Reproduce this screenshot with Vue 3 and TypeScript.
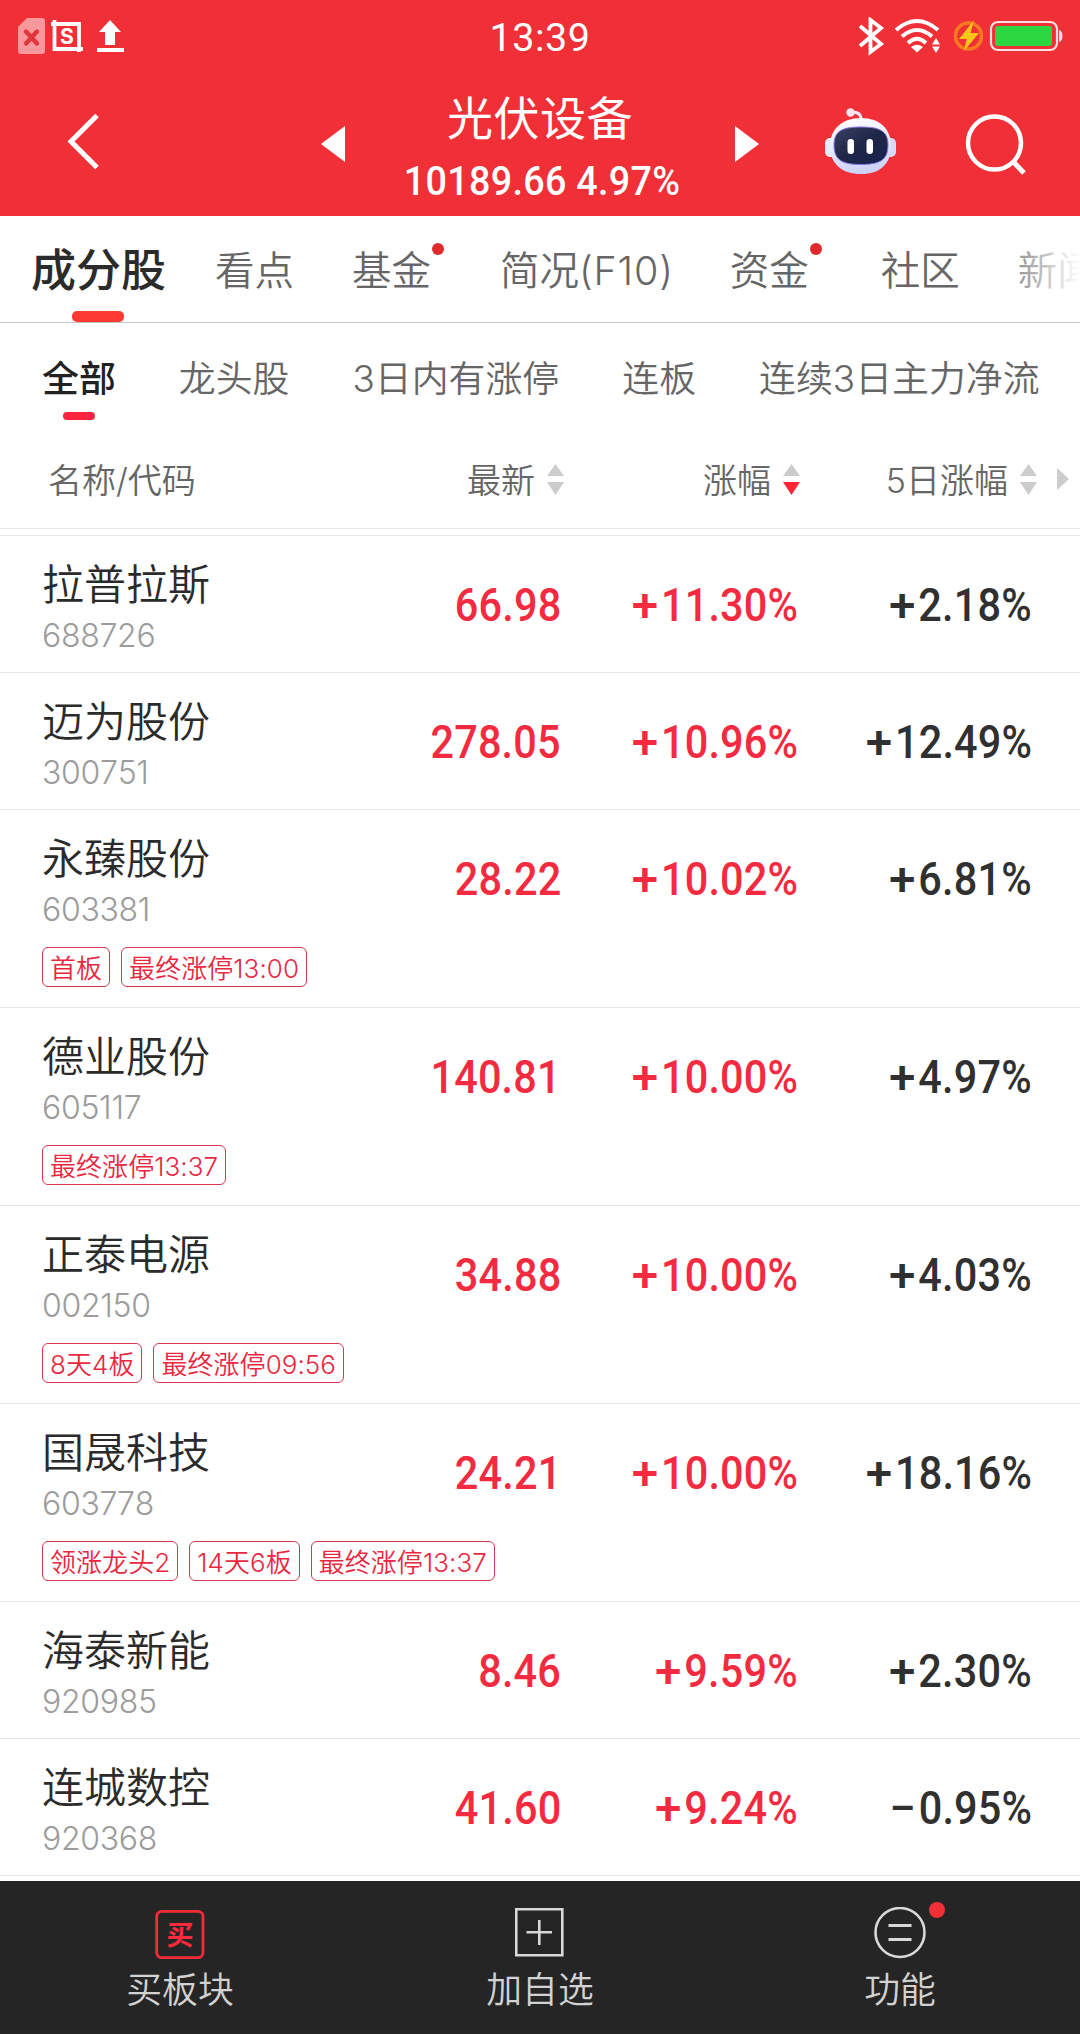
<script setup lang="ts">
interface Stock {
  name: string
  code: string
  price: string
  change: string
  five: string
  tags: string[]
}

const tabs = [
  { label: '成分股', active: true },
  { label: '看点' },
  { label: '基金', dot: true },
  { label: '简况', suffix: '(F10)' },
  { label: '资金', dot: true },
  { label: '社区' },
  { label: '新闻' },
]

const filters = ['全部', '龙头股', '3日内有涨停', '连板', '连续3日主力净流']

const stocks: Stock[] = [
  { name: '拉普拉斯', code: '688726', price: '66.98', change: '+11.30%', five: '+2.18%', tags: [] },
  { name: '迈为股份', code: '300751', price: '278.05', change: '+10.96%', five: '+12.49%', tags: [] },
  { name: '永臻股份', code: '603381', price: '28.22', change: '+10.02%', five: '+6.81%', tags: ['首板', '最终涨停13:00'] },
  { name: '德业股份', code: '605117', price: '140.81', change: '+10.00%', five: '+4.97%', tags: ['最终涨停13:37'] },
  { name: '正泰电源', code: '002150', price: '34.88', change: '+10.00%', five: '+4.03%', tags: ['8天4板', '最终涨停09:56'] },
  { name: '国晟科技', code: '603778', price: '24.21', change: '+10.00%', five: '+18.16%', tags: ['领涨龙头2', '14天6板', '最终涨停13:37'] },
  { name: '海泰新能', code: '920985', price: '8.46', change: '+9.59%', five: '+2.30%', tags: [] },
  { name: '连城数控', code: '920368', price: '41.60', change: '+9.24%', five: '−0.95%', tags: [] },
]
</script>

<template>
  <div class="screen">
    <header class="top">
      <div class="status">
        <svg class="status-left" width="112" height="44" viewBox="0 0 112 44">
          <path d="M9 0H24a3 3 0 0 1 3 3V33a3 3 0 0 1-3 3H3a3 3 0 0 1-3-3V9Z" fill="#f9989b" />
          <path d="M8 13.500L19 25.500M19 13.500L8 25.500" stroke="#e2343b" stroke-width="4.400" stroke-linecap="round" />
          <path d="M36.500 2V31H65M33 6H61V34" fill="none" stroke="#fff" stroke-width="3.800" />
          <text x="49" y="26" text-anchor="middle" class="s-letter">S</text>
          <path d="M92 2L103 14H97V27H87V14H81Z" fill="#fff" />
          <path d="M79 32H106" stroke="#fff" stroke-width="4" />
        </svg>
        <span class="clock">13:39</span>
        <svg class="status-right" width="204" height="40" viewBox="0 0 204 40">
          <path d="M1 9L22 27L11.500 35V3L22 11L1 29" fill="none" stroke="#fff" stroke-width="3.800" />
          <g fill="none" stroke="#fff" stroke-width="4">
            <path d="M37 13Q58 -5 79 13" />
            <path d="M43 19.500Q58 6.500 73 19.500" />
            <path d="M49 26Q58 17.500 67 26" />
          </g>
          <path d="M52 30Q58 25.500 64 30L58 35.500Z" fill="#fff" />
          <path d="M77 21L81 27.500H73ZM77 36L81 29.500H73Z" fill="#fff" />
          <circle cx="109.500" cy="19" r="13" fill="none" stroke="#f77a22" stroke-width="3.500" />
          <path d="M115 3L100 22H107.500L105 34L120 16H111.500Z" fill="#ffc518" />
          <rect x="132" y="5" width="66" height="28" rx="7" fill="none" stroke="#ffe1e1" stroke-width="2.200" />
          <rect x="136" y="9" width="57" height="20" rx="3" fill="#2bd841" />
          <path d="M200 13Q203.500 14 203.500 19T200 25Z" fill="#ffe1e1" />
        </svg>
      </div>
      <div class="nav">
        <svg class="back" width="36" height="64" viewBox="0 0 36 64">
          <path d="M31 5.500L5 31.500L31 57.500" fill="none" stroke="#fff" stroke-width="5" />
        </svg>
        <svg class="prev" width="24" height="36" viewBox="0 0 24 36"><path d="M24 0V36L0 18Z" fill="#fff" /></svg>
        <div class="heading">
          <h1>光伏设备</h1>
          <div class="index"><span>10189.66 4.97%</span></div>
        </div>
        <svg class="next" width="24" height="36" viewBox="0 0 24 36"><path d="M0 0V36L24 18Z" fill="#fff" /></svg>
        <svg class="robot" width="74" height="70" viewBox="0 0 74 70">
          <defs>
            <linearGradient id="shell" x1="0" y1="0" x2="0.200" y2="1">
              <stop offset="0" stop-color="#fff" />
              <stop offset="0.600" stop-color="#e6e8fb" />
              <stop offset="1" stop-color="#cdd2f6" />
            </linearGradient>
            <linearGradient id="visor" x1="0" y1="0" x2="1" y2="1">
              <stop offset="0" stop-color="#3b4265" />
              <stop offset="0.500" stop-color="#1e2647" />
              <stop offset="1" stop-color="#172350" />
            </linearGradient>
          </defs>
          <path d="M26 5Q38 2 37 14" fill="none" stroke="#f3e9fa" stroke-width="3.200" />
          <circle cx="26.500" cy="4.500" r="4.200" fill="#fbe6ef" />
          <rect x="1" y="30" width="14" height="19" rx="5" fill="#e9ebfd" />
          <rect x="58" y="30" width="14" height="19" rx="5" fill="#d5d9fa" />
          <path d="M37 10C56 10 67 21 67 38C67 56 56 66 37 66S6 56 6 38C6 21 18 10 37 10Z" fill="url(#shell)" />
          <path d="M37 19C56 19 64 23 64 37C64 52 56 56.500 37 56.500S10 52 10 37C10 23 18 19 37 19Z" fill="url(#visor)" stroke="#8978e8" stroke-width="1" />
          <rect x="23.500" y="31" width="6.500" height="15" rx="3.250" fill="#fff" />
          <rect x="42.500" y="31" width="6.500" height="15" rx="3.250" fill="#fff" />
        </svg>
        <svg class="search" width="64" height="64" viewBox="0 0 64 64">
          <circle cx="29.500" cy="30" r="26.500" fill="none" stroke="#fff" stroke-width="4.500" />
          <path d="M47.500 48L59 60" stroke="#fff" stroke-width="5" />
        </svg>
      </div>
    </header>

    <nav class="tabs">
      <div v-for="t in tabs" :key="t.label" class="tab" :class="{ active: t.active, dotted: t.dot }">
        {{ t.label }}<span v-if="t.suffix" class="suffix">{{ t.suffix }}</span><i v-if="t.dot" class="dot"></i>
      </div>
    </nav>

    <div class="filters">
      <div v-for="(f, i) in filters" :key="f" class="filter" :class="{ active: i === 0 }">{{ f }}</div>
    </div>

    <div class="thead">
      <span class="h-name">名称/代码</span>
      <span class="h-cell h1c">最新<svg width="17" height="31" viewBox="0 0 17 31"><path d="M8.500 0L17 12H0Z" fill="#ccc" /><path d="M8.500 31L17 18H0Z" fill="#ccc" /></svg></span>
      <span class="h-cell h2c">涨幅<svg width="17" height="31" viewBox="0 0 17 31"><path d="M8.500 0L17 12H0Z" fill="#ccc" /><path d="M8.500 31L17 18H0Z" fill="#ff2436" /></svg></span>
      <span class="h-cell h3c">5日涨幅<svg width="17" height="31" viewBox="0 0 17 31"><path d="M8.500 0L17 12H0Z" fill="#ccc" /><path d="M8.500 31L17 18H0Z" fill="#ccc" /></svg></span>
      <svg class="more" width="12" height="22" viewBox="0 0 12 22"><path d="M0 0L12 11L0 22Z" fill="#ccc" /></svg>
    </div>

    <main class="list">
      <article v-for="s in stocks" :key="s.code" class="stock" :class="{ tall: s.tags.length }">
        <div class="cells">
          <div class="ident">
            <div class="name">{{ s.name }}</div>
            <div class="code">{{ s.code }}</div>
          </div>
          <div class="num up c1"><span>{{ s.price }}</span></div>
          <div class="num up c2"><span><b>{{ s.change[0] }}</b>{{ s.change.slice(1) }}</span></div>
          <div class="num c3"><span><b>{{ s.five[0] }}</b>{{ s.five.slice(1) }}</span></div>
        </div>
        <div v-if="s.tags.length" class="tags">
          <span v-for="t in s.tags" :key="t" class="tag">{{ t }}</span>
        </div>
      </article>
    </main>

    <footer class="bottom">
      <div class="action">
        <svg width="52" height="52" viewBox="0 0 52 52">
          <rect x="2.700" y="4.300" width="46.300" height="46.300" rx="5" fill="none" stroke="#ef2d37" stroke-width="2.800" />
          <text x="26" y="37.500" text-anchor="middle" class="buy">买</text>
        </svg>
        <span>买板块</span>
      </div>
      <div class="action">
        <svg width="52" height="52" viewBox="0 0 52 52">
          <path d="M2.300 2.300H48.300V48.300H2.300ZM25.300 13V38M12.500 25.300H38" fill="none" stroke="#d8d8d8" stroke-width="2.600" />
        </svg>
        <span>加自选</span>
      </div>
      <div class="action">
        <svg width="52" height="52" viewBox="0 0 52 52">
          <circle cx="26" cy="25.500" r="24.500" fill="none" stroke="#d8d8d8" stroke-width="2.600" />
          <path d="M14.500 18.500H37.500M14.500 32.500H37.500" stroke="#d8d8d8" stroke-width="3" />
        </svg>
        <i class="badge"></i>
        <span>功能</span>
      </div>
    </footer>
  </div>
</template>

<style>
body { margin: 0; background: #fff; }
</style>

<style scoped>
.screen {
  width: 1080px;
  height: 2034px;
  overflow: hidden;
  display: flex;
  flex-direction: column;
  background: #fff;
  color: #2b2b2b;
  font-family: Inter, "Noto Sans CJK SC", sans-serif;
  font-weight: 350;
  white-space: nowrap;
}
svg { display: block; flex: none; }
.top { height: 216px; background: #f03036; color: #fff; flex: none; }
.status { height: 74px; display: grid; grid-template-columns: 1fr auto 1fr; align-items: start; }
.status-left { margin: 18px 0 0 18px; }
.status-right { margin: 17px 17px 0 auto; }
.s-letter { font: 700 21px Inter, sans-serif; fill: #fff; }
.clock { font: 400 39.5px/76px Roboto, sans-serif; letter-spacing: 0.5px; }
.nav { height: 142px; display: flex; align-items: flex-start; }
.back { margin: 36px 0 0 66px; }
.prev { margin: 52px 0 0 219px; }
.next { margin: 52px 0 0 0; }
.heading { width: 390px; text-align: center; }
h1 { margin: 11px 0 0; font-size: 46px; line-height: 66px; font-weight: 400; letter-spacing: 0.5px; }
.index { font: 500 41px/61px Roboto, sans-serif; }
.index span { display: inline-block; transform: scaleX(0.92); margin: 0 -20px; letter-spacing: 0.3px; padding-left: 4px; }
.robot { margin: 34px 0 0 65px; }
.search { margin: 39px 0 0 67px; }

.tabs { height: 106px; border-bottom: 1px solid #c4c4c4; display: flex; align-items: stretch; padding-left: 31px; gap: 58px; flex: none; overflow: hidden; color: #666; position: relative; }
.tabs::after { content: ""; position: absolute; right: 0; top: 0; width: 72px; height: 100px; background: linear-gradient(90deg, rgba(255, 255, 255, 0.2), #fff); }
.tab { position: relative; font-size: 39.5px; line-height: 110px; height: 106px; flex: none; }
.tab.dotted { margin-right: 11px; }
.tab.dotted ~ .dotted { margin-right: 14px; }
.tab.active { font-size: 45px; color: #2b2b2b; font-weight: 500; margin-right: -9px; }
.tab.active::after { content: ""; position: absolute; left: 50%; margin-left: -27px; bottom: 0; width: 52px; height: 11px; border-radius: 5px; background: #fb3a33; }
.suffix { font-size: 39.5px; letter-spacing: 0.8px; margin-right: -2px; }
.dot { position: absolute; top: 27px; right: -13px; width: 12px; height: 12px; border-radius: 50%; background: #e02a2c; }

.filters { height: 113px; padding-left: 42px; display: flex; gap: 63px; color: #666; flex: none; }
.filter { position: relative; font-size: 36.9px; line-height: 112px; }
.filter.active { color: #222; font-weight: 500; }
.filter.active::after { content: ""; position: absolute; left: 50%; margin-left: -16px; top: 89px; width: 32px; height: 8px; border-radius: 4px; background: #fc2540; }

.thead { height: 92px; border-bottom: 1px solid #e8e8e8; display: flex; color: #666; font-size: 34px; line-height: 89px; flex: none; }
.h-name { width: 300px; padding-left: 48px; box-sizing: border-box; }
.h-cell { display: flex; justify-content: flex-end; align-items: flex-start; gap: 12px; }
.h-cell svg { margin-top: 28px; }
.h1c { width: 264px; }
.h2c { width: 236px; }
.h3c { width: 237px; }
.more { margin: 32px 0 0 20px; }

.list { margin-top: 6px; border-top: 1px solid #e8e8e8; flex: none; }
.stock { height: 137px; border-bottom: 1px solid #e8e8e8; box-sizing: border-box; }
.stock.tall { height: 198px; }
.cells { display: flex; height: 136px; }
.ident { width: 300px; padding-left: 42px; box-sizing: border-box; }
.name { font-size: 42px; line-height: 60px; margin-top: 19px; }
.code { font-size: 32px; line-height: 42px; color: #9c9c9c; font-weight: 300; letter-spacing: -0.3px; font-kerning: none; }
.num { font: 500 46px/138px Roboto, sans-serif; text-align: right; color: #303030; }
.num span { display: inline-block; transform: scaleX(0.9); transform-origin: right; letter-spacing: 0.2px; }
.num b { display: inline-block; font-weight: 500; margin-right: 3px; transform: scaleX(1.15); transform-origin: right; }
.num.up { color: #f42a40; }
.c1 { width: 261px; }
.c2 { width: 237px; }
.c3 { width: 234px; }
.tags { display: flex; gap: 11px; padding-left: 42px; margin-top: 1px; }
.tag { height: 40px; box-sizing: border-box; border: 1px solid #d8384e; border-radius: 6px; padding: 0 7px; color: #e9283f; font-size: 26px; line-height: 41px; font-kerning: none; letter-spacing: 0.05px; }

.bottom { margin-top: auto; height: 153px; background: #252525; display: flex; flex: none; color: #d2d2d2; }
.action { flex: 1; display: flex; flex-direction: column; align-items: center; position: relative; font-size: 35.8px; line-height: 50px; padding-top: 26px; }
.action span { margin-top: 6px; }
.buy { font: 700 27px "Noto Sans CJK SC", sans-serif; fill: #ff2a3c; }
.badge { position: absolute; left: 209px; top: 21px; width: 16px; height: 16px; border-radius: 50%; background: #f03036; }
</style>
